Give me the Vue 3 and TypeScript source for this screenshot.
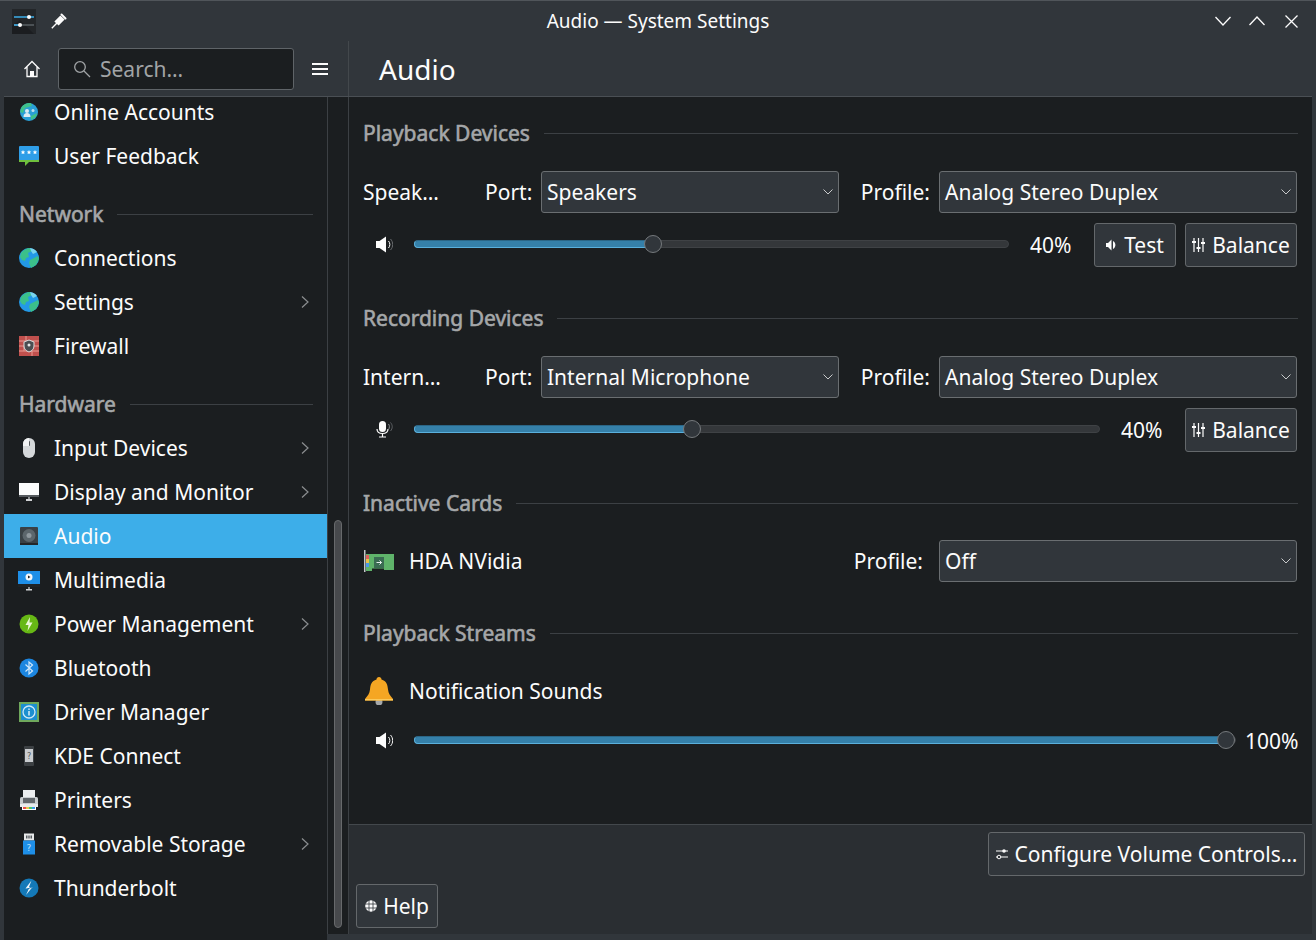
<script setup lang="ts">
const I: Record<string, string> = {
  online: '<circle cx="12" cy="12" r="9" fill="#2a9fd6"/><path d="M4.500 7c3-3.500 6-4.500 9.500-4l1 3-7 2-2 5-3-1zM14 16l6-3-1 4-5 3z" fill="#3fc08a"/><circle cx="10" cy="11" r="2" fill="#dcecf3"/><path d="M6.500 17c0-3 1.500-4 3.500-4s3.500 1 3.500 4z" fill="#dcecf3"/><circle cx="16" cy="10.500" r="1.500" fill="#bfe0ee"/>',
  feedback: '<path d="M2 3h20v15H12l-4 4v-4H2z" fill="#6fc03d"/><rect x="2" y="2" width="20" height="14" rx="1" fill="#2f9ee8"/><path d="M6 6l.7 1.400 1.500.2-1.100 1 .3 1.500L6 9.400l-1.400.7.3-1.500-1.100-1 1.500-.2zM12 6l.7 1.400 1.500.2-1.100 1 .3 1.500-1.400-.7-1.400.7.3-1.500-1.100-1 1.500-.2zM18 6l.7 1.400 1.500.2-1.100 1 .3 1.500-1.400-.7-1.400.7.3-1.500-1.100-1 1.500-.2z" fill="#fff"/>',
  globe: '<circle cx="12" cy="12" r="10" fill="#2399e6"/><path d="M4 7c2-3 6-5 9-5l2 3-4 2 1 4-3 1-1 3-3-1-2-3zM13 14l8-4 1 3-3 6-5 3-2-5z" fill="#3bc08a"/><path d="M13 2c3 .3 5.500 1.800 7 4l-4 2-2-3z" fill="#79d4ee"/>',
  firewall: '<rect x="2" y="2" width="20" height="20" fill="#c0504d"/><path d="M2 7h20M2 12h20M2 17h20M9 2v5M16 7v5M7 12v5M15 17v5" stroke="#e79a93" stroke-width="1"/><path d="M12 6l5 2v4c0 3-2 5-5 6-3-1-5-3-5-6V8z" fill="#4b4f52" stroke="#dcdcdc"/><circle cx="12" cy="11" r="1.500" fill="#e8e8e8"/>',
  mouse: '<rect x="6" y="2" width="12" height="20" rx="6" fill="#d5d8da"/><rect x="11" y="5" width="2" height="5" rx="1" fill="#55595c"/><path d="M6 8a6 6 0 0 1 6-6v8H6z" fill="#f2f3f4"/>',
  display: '<rect x="2" y="3" width="20" height="14" fill="#fbfcfc"/><rect x="2" y="15" width="20" height="2" fill="#555a5e"/><rect x="9" y="19" width="6" height="2" fill="#d0d2d4"/><rect x="11" y="17" width="2" height="2" fill="#8a8d90"/>',
  audio: '<rect x="3" y="3" width="18" height="18" rx="1" fill="#3a4146"/><circle cx="12" cy="11.500" r="6.500" fill="#5c666c"/><circle cx="12" cy="11.500" r="2.500" fill="#8f989e"/><rect x="3" y="19" width="18" height="2" fill="#232629"/>',
  multimedia: '<rect x="1" y="3" width="22" height="16" fill="#1f2326"/><rect x="1" y="3" width="22" height="13" fill="#1e8fe8"/><circle cx="12" cy="9" r="3.500" fill="#f5f7f8"/><path d="M11 7.500l2.500 1.500-2.500 1.500z" fill="#1f2326"/><rect x="9" y="21" width="6" height="1.500" fill="#d5d7d9"/><rect x="11" y="19" width="2" height="2" fill="#8a8d90"/>',
  power: '<circle cx="12" cy="12" r="9.500" fill="#67b815"/><path d="M13 5l-4.500 8h3L10.500 19 15.500 10.500h-3z" fill="#eaf7d4"/>',
  bluetooth: '<circle cx="12" cy="12" r="9.500" fill="#1c86e0"/><path d="M8.500 8.500l7 6.500-3.500 3V6l3.500 3-7 6.500" fill="none" stroke="#cfe7fb" stroke-width="1.200"/>',
  driver: '<rect x="2" y="2" width="20" height="20" fill="#6fa85c"/><rect x="4" y="4" width="16" height="16" fill="#1c8fd0"/><circle cx="12" cy="12" r="6" fill="none" stroke="#cfe9f7" stroke-width="1.300"/><rect x="11.300" y="11" width="1.400" height="4.500" fill="#e8f4fa"/><rect x="11.300" y="8.500" width="1.400" height="1.400" fill="#e8f4fa"/>',
  kde: '<rect x="7" y="2" width="10" height="20" rx="1" fill="#3c4043"/><rect x="8" y="5" width="8" height="13" fill="#c9cccf"/><text x="12" y="15" font-size="8" fill="#55595c" text-anchor="middle" font-family="DejaVu Sans">?</text>',
  printer: '<rect x="6" y="2" width="12" height="8" fill="#eceeef"/><rect x="3" y="9" width="18" height="10" rx="1.500" fill="#c8ccce"/><rect x="3" y="16" width="18" height="3" fill="#e8eaeb"/><rect x="5" y="19" width="14" height="3" fill="#ffffff"/><path d="M6 19h3v2H6z" fill="#e8504a"/><path d="M9 19h3v2H9z" fill="#e8c84a"/><path d="M12 19h3v2h-3z" fill="#4ac86a"/><path d="M15 19h3v2h-3z" fill="#3d9ae8"/><rect x="6" y="10" width="12" height="5" fill="#62676b"/>',
  usb: '<rect x="7" y="1.500" width="10" height="7" fill="#e6e8e9"/><path d="M9 3.500h1.500v3H9zM13.500 3.500H15v3h-1.500zM11.300 3.500h1.400v3h-1.400z" fill="#555a5e"/><rect x="6" y="8.500" width="12" height="14" fill="#1e8fe8"/><text x="12" y="19" font-size="9" fill="#bfe0fb" text-anchor="middle" font-family="DejaVu Sans">?</text>',
  bolt: '<circle cx="12" cy="12" r="9.500" fill="#1479b8"/><path d="M14.500 4.500L8.500 12.500h3.500l-3 6.500 6.500-8H12z" fill="#eef6fb"/><path d="M8 14l7-3" stroke="#1479b8" stroke-width="1"/>',
}

interface Entry { name: string; icon: string; arrow?: boolean; active?: boolean }
interface Group { title?: string; items: Entry[] }

const groups: Group[] = [
  { items: [
    { name: 'Online Accounts', icon: 'online' },
    { name: 'User Feedback', icon: 'feedback' },
  ] },
  { title: 'Network', items: [
    { name: 'Connections', icon: 'globe' },
    { name: 'Settings', icon: 'globe', arrow: true },
    { name: 'Firewall', icon: 'firewall' },
  ] },
  { title: 'Hardware', items: [
    { name: 'Input Devices', icon: 'mouse', arrow: true },
    { name: 'Display and Monitor', icon: 'display', arrow: true },
    { name: 'Audio', icon: 'audio', active: true },
    { name: 'Multimedia', icon: 'multimedia' },
    { name: 'Power Management', icon: 'power', arrow: true },
    { name: 'Bluetooth', icon: 'bluetooth' },
    { name: 'Driver Manager', icon: 'driver' },
    { name: 'KDE Connect', icon: 'kde' },
    { name: 'Printers', icon: 'printer' },
    { name: 'Removable Storage', icon: 'usb', arrow: true },
    { name: 'Thunderbolt', icon: 'bolt' },
  ] },
]

const fillW = (p: number) => `calc(9px + (100% - 18px) * ${p})`
</script>

<template>
  <div class="window">
    <header class="titlebar">
      <div class="tb-left">
        <svg class="app-icon" width="24" height="25" viewBox="0 0 24 25">
          <rect width="24" height="25" fill="#232629" />
          <path d="M0 25V17L8 11l14 14z" fill="#1b1d20" />
          <path d="M2 8h20" stroke="#3daee9" stroke-width="1.500" />
          <path d="M2 16h20" stroke="#5a6065" stroke-width="1.500" />
          <path d="M2 16h7" stroke="#3daee9" stroke-width="1.500" />
          <circle cx="17" cy="8" r="2" fill="#fcfcfc" />
          <circle cx="8" cy="16" r="2" fill="#fcfcfc" />
        </svg>
        <svg width="16" height="16" viewBox="0 0 16 16">
          <path d="M.8 15.200L6 10" stroke="#fcfcfc" stroke-width="1.400" />
          <path d="M5.500 10.500l6-6" stroke="#fcfcfc" stroke-width="6" />
          <path d="M10.500 1.500l4 4" stroke="#fcfcfc" stroke-width="2" stroke-linecap="round" />
        </svg>
      </div>
      <div class="title">Audio — System Settings</div>
      <div class="tb-right">
        <svg width="16" height="10" viewBox="0 0 16 10"><path d="M.5 1L8 9l7.500-8" fill="none" stroke="#fcfcfc" stroke-width="1.300" /></svg>
        <svg width="16" height="10" viewBox="0 0 16 10"><path d="M.5 9L8 1l7.500 8" fill="none" stroke="#fcfcfc" stroke-width="1.300" /></svg>
        <svg class="close" width="13" height="13" viewBox="0 0 13 13"><path d="M.5.500l12 12M12.500.500l-12 12" fill="none" stroke="#fcfcfc" stroke-width="1.300" /></svg>
      </div>
    </header>

    <div class="toolbar">
      <div class="tool-left">
        <svg class="home" width="18" height="18" viewBox="0 0 18 18">
          <path d="M1.500 9L9 1.500 16.500 9M4 7v9.500h10V7" fill="none" stroke="#fcfcfc" stroke-width="1.300" />
          <rect x="7" y="11" width="4" height="5.500" fill="#fcfcfc" />
        </svg>
        <div class="search">
          <svg width="18" height="18" viewBox="0 0 18 18">
            <circle cx="7" cy="7" r="5.300" fill="none" stroke="#a1a4a6" stroke-width="1.300" />
            <path d="M11 11l6 6" stroke="#a1a4a6" stroke-width="1.300" />
          </svg>
          <span>Search…</span>
        </div>
        <div class="burger"><i></i><i></i><i></i></div>
      </div>
      <h1 class="page-title">Audio</h1>
    </div>

    <div class="body">
      <nav class="sidebar">
        <div class="list">
          <div v-for="(g, gi) in groups" :key="gi">
            <div v-if="g.title" class="group-head">
              <span>{{ g.title }}</span><b></b>
            </div>
            <div v-for="it in g.items" :key="it.name" class="item" :class="{ active: it.active }">
              <svg class="item-icon" width="24" height="24" viewBox="0 0 24 24" v-html="I[it.icon]"></svg>
              <span>{{ it.name }}</span>
              <svg v-if="it.arrow" class="chev" width="10" height="14" viewBox="0 0 10 14">
                <path d="M2 1.500L8 7l-6 5.500" fill="none" stroke="#8b8e90" stroke-width="1.200" />
              </svg>
            </div>
          </div>
        </div>
      </nav>
      <div class="gutter"><div class="thumb"></div></div>

      <main class="main">
        <div class="content">
          <section class="sec sec-first">
            <div class="heading"><span>Playback Devices</span><b></b></div>
            <div class="dev-row">
              <span>Speak…</span>
              <span class="r">Port:</span>
              <div class="combo"><span>Speakers</span><svg width="10" height="6" viewBox="0 0 10 6"><path d="M.5.500L5 5 9.500.500" fill="none" stroke="#c8cacb" stroke-width="1" /></svg></div>
              <span class="r">Profile:</span>
              <div class="combo"><span>Analog Stereo Duplex</span><svg width="10" height="6" viewBox="0 0 10 6"><path d="M.5.500L5 5 9.500.500" fill="none" stroke="#c8cacb" stroke-width="1" /></svg></div>
            </div>
            <div class="slider-row">
              <svg class="vol" width="17" height="17" viewBox="0 0 17 17">
                <path d="M0 5h3.500L10 .5v16L3.500 12H0z" fill="#fcfcfc" />
                <path d="M12.500 5c1.800 2 1.800 5 0 7" fill="none" stroke="#fcfcfc" stroke-width="1" />
                <path d="M14.500 3c2.900 3 2.900 8 0 11" fill="none" stroke="#6a6d70" stroke-width="1" />
              </svg>
              <div class="track">
                <div class="fill" :style="{ width: fillW(0.399) }"></div>
                <div class="knob" :style="{ left: fillW(0.399) }"></div>
              </div>
              <span class="pct">40%</span>
              <button class="btn test">
                <svg width="12" height="12" viewBox="0 0 12 12"><path d="M0 4h2l3.500-3.500v11L2 8H0z" fill="#fcfcfc" /><path d="M7 2c3.200 2 3.200 6 0 8z" fill="#fcfcfc" /></svg>
                Test
              </button>
              <button class="btn bal">
                <svg width="13" height="14" viewBox="0 0 13 14"><path d="M2 0v14M6.500 0v14M11 0v14" stroke="#fcfcfc" stroke-width="1.200" /><path d="M0 4h4M4.500 10h4M9 5h4" stroke="#fcfcfc" stroke-width="2" /></svg>
                Balance
              </button>
            </div>
          </section>

          <section class="sec">
            <div class="heading"><span>Recording Devices</span><b></b></div>
            <div class="dev-row">
              <span>Intern…</span>
              <span class="r">Port:</span>
              <div class="combo"><span>Internal Microphone</span><svg width="10" height="6" viewBox="0 0 10 6"><path d="M.5.500L5 5 9.500.500" fill="none" stroke="#c8cacb" stroke-width="1" /></svg></div>
              <span class="r">Profile:</span>
              <div class="combo"><span>Analog Stereo Duplex</span><svg width="10" height="6" viewBox="0 0 10 6"><path d="M.5.500L5 5 9.500.500" fill="none" stroke="#c8cacb" stroke-width="1" /></svg></div>
            </div>
            <div class="slider-row">
              <svg class="vol" width="17" height="17" viewBox="0 0 17 17">
                <rect x="3" y="0" width="7" height="11" rx="3.500" fill="#fcfcfc" />
                <path d="M1 8c0 3 2.300 4.500 5.500 4.500S12 11 12 8M6.500 12.500v3M3 16h7" fill="none" stroke="#fcfcfc" stroke-width="1.200" />
                <path d="M12.500 3c1.200 1.500 1.200 4 0 5.500" fill="none" stroke="#8a8d90" stroke-width="1" />
                <path d="M14.500 1.500c2.300 2.500 2.300 6 0 8.500" fill="none" stroke="#5f6265" stroke-width="1" />
              </svg>
              <div class="track">
                <div class="fill" :style="{ width: fillW(0.403) }"></div>
                <div class="knob" :style="{ left: fillW(0.403) }"></div>
              </div>
              <span class="pct">40%</span>
              <button class="btn bal">
                <svg width="13" height="14" viewBox="0 0 13 14"><path d="M2 0v14M6.500 0v14M11 0v14" stroke="#fcfcfc" stroke-width="1.200" /><path d="M0 4h4M4.500 10h4M9 5h4" stroke="#fcfcfc" stroke-width="2" /></svg>
                Balance
              </button>
            </div>
          </section>

          <section class="sec">
            <div class="heading"><span>Inactive Cards</span><b></b></div>
            <div class="card-row">
              <svg class="big" width="30" height="22" viewBox="0 0 30 22">
                <rect x="0" y="0" width="1.500" height="22" fill="#c4c8ca" />
                <path d="M2 4h28v16H20v-1.500H8V21H2z" fill="#5fb36a" />
                <rect x="2" y="5" width="3" height="4" fill="#e0605a" />
                <rect x="2" y="9" width="3" height="4" fill="#e8c04a" />
                <rect x="2" y="13" width="3" height="4" fill="#4a9ae8" />
                <rect x="10" y="7" width="10" height="11" fill="#3a6b52" />
                <path d="M12.500 12.500h5M15.500 10.500l2 2-2 2" fill="none" stroke="#e8f0ec" stroke-width="1" />
              </svg>
              <span class="grow">HDA NVidia</span>
              <span class="r">Profile:</span>
              <div class="combo wide"><span>Off</span><svg width="10" height="6" viewBox="0 0 10 6"><path d="M.5.500L5 5 9.500.500" fill="none" stroke="#c8cacb" stroke-width="1" /></svg></div>
            </div>
          </section>

          <section class="sec">
            <div class="heading"><span>Playback Streams</span><b></b></div>
            <div class="card-row stream">
              <svg class="big" width="30" height="28" viewBox="0 0 30 28">
                <circle cx="15" cy="25" r="3.500" fill="#a4a7a9" />
                <path d="M15 0c1.500 0 2.500 1 2.500 2.500 5 1.500 6 5 6.500 10 .5 4 2 6 5 9.500v1.500H1V22c3-3.500 4.500-5.500 5-9.500.5-5 1.500-8.500 6.500-10C12.500 1 13.500 0 15 0z" fill="#f5a623" />
                <path d="M1 22h28v1.500H1z" fill="#fbc95b" />
              </svg>
              <span>Notification Sounds</span>
            </div>
            <div class="slider-row stream-slider">
              <svg class="vol" width="17" height="17" viewBox="0 0 17 17">
                <path d="M0 5h3.500L10 .5v16L3.500 12H0z" fill="#fcfcfc" />
                <path d="M12.500 5c1.800 2 1.800 5 0 7" fill="none" stroke="#fcfcfc" stroke-width="1" />
                <path d="M14.500 3c2.900 3 2.900 8 0 11" fill="none" stroke="#fcfcfc" stroke-width="1" />
              </svg>
              <div class="track">
                <div class="fill" :style="{ width: fillW(1) }"></div>
                <div class="knob" :style="{ left: fillW(1) }"></div>
              </div>
              <span class="pct small">100%</span>
            </div>
          </section>
        </div>

        <footer class="footer">
          <div class="foot-right">
            <button class="btn cfg">
              <svg width="12" height="12" viewBox="0 0 12 12">
                <path d="M0 3h12M0 9h12" stroke="#fcfcfc" stroke-width="1" />
                <circle cx="8" cy="3" r="1.800" fill="#fcfcfc" />
                <circle cx="3" cy="9" r="1.800" fill="#31363b" stroke="#fcfcfc" />
              </svg>
              <span>Configure Volume Controls…</span>
            </button>
          </div>
          <button class="btn help">
            <svg width="12" height="12" viewBox="0 0 12 12">
              <circle cx="6" cy="6" r="5.800" fill="#fcfcfc" />
              <path d="M4 0v12M8 0v12M0 4h12M0 8h12" stroke="#31363b" stroke-width="0.800" />
            </svg>
            Help
          </button>
        </footer>
      </main>
    </div>
  </div>
</template>

<style>
html, body { margin: 0; background: #31363b; }
</style>

<style scoped>
.window {
  width: 1316px;
  height: 940px;
  box-sizing: border-box;
  display: flex;
  flex-direction: column;
  background: #31363b;
  border-top: 1px solid #50555a;
  padding: 0 4px 6px;
  font-family: "Noto Sans", sans-serif;
  font-size: 21px;
  color: #fcfcfc;
  overflow: hidden;
}
.titlebar {
  height: 40px;
  flex: none;
  display: flex;
  align-items: center;
  position: relative;
}
.tb-left { display: flex; align-items: center; gap: 15px; margin-left: 8px; flex: 1; }
.title { font-size: 19px; text-align: center; position: absolute; left: 0; right: 0; }
.tb-right { display: flex; align-items: center; gap: 18px; margin-right: 14px; z-index: 1; }
.close { margin-left: 2px; }

.toolbar {
  height: 56px;
  flex: none;
  display: flex;
  border-bottom: 1px solid #4a4f54;
  box-sizing: border-box;
}
.tool-left {
  width: 345px;
  flex: none;
  display: flex;
  align-items: center;
  box-sizing: border-box;
  border-right: 1px solid #43484c;
  padding-top: 1px;
}
.home { margin-left: 19px; }
.search {
  width: 236px;
  height: 42px;
  box-sizing: border-box;
  margin-left: 17px;
  border: 1px solid #5f6468;
  border-radius: 3px;
  background: #1b1e20;
  display: flex;
  align-items: center;
  gap: 9px;
  padding-left: 14px;
  color: #a1a4a6;
}
.burger { margin-left: 18px; width: 16px; display: flex; flex-direction: column; gap: 3px; }
.burger i { display: block; height: 2px; background: #fcfcfc; }
.page-title { margin: 0 0 0 30px; font-size: 28px; font-weight: 400; line-height: 56px; }

.body { flex: 1; min-height: 0; display: flex; }
.sidebar { width: 323px; flex: none; background: #1b1e20; overflow: hidden; margin-bottom: -6px; }
.list { margin-top: -7px; }
.group-head {
  height: 44px;
  padding: 14px 14px 0 15px;
  display: flex;
  align-items: center;
  color: #a5a7a9;
  -webkit-text-stroke: 0.6px #a5a7a9;
  gap: 14px;
}
.group-head b { flex: 1; height: 1px; background: #3c4044; }
.item {
  height: 44px;
  display: flex;
  align-items: center;
  padding: 0 0 0 13px;
  position: relative;
}
.item.active { background: #3daee9; }
.item-icon { margin-right: 13px; flex: none; width: 24px; height: 24px; }
.chev { position: absolute; left: 296px; top: 15px; }

.gutter {
  width: 22px;
  flex: none;
  box-sizing: border-box;
  background: #1b1e20;
  border-left: 1px solid #3c4044;
  border-right: 1px solid #3c4044;
  padding-top: 423px;
  padding-left: 6px;
}
.thumb {
  width: 8px;
  height: 408px;
  box-sizing: border-box;
  background: #47494c;
  border: 1px solid #67696b;
  border-radius: 4px;
}

.main { flex: 1; min-width: 0; display: flex; flex-direction: column; background: #1b1e20; }
.content { flex: 1; min-height: 0; padding: 0 15px 0 14px; }
.sec { margin-top: 36px; }
.sec-first { margin-top: 21px; }
.heading {
  height: 30px;
  display: flex;
  align-items: center;
  gap: 14px;
  color: #a5a7a9;
  -webkit-text-stroke: 0.6px #a5a7a9;
  margin-bottom: 23px;
  margin-right: -1px;
}
.heading b { flex: 1; height: 1px; background: #3c4044; }
.dev-row {
  display: grid;
  grid-template-columns: 113px 47px 298px 82px 358px;
  column-gap: 9px;
  align-items: center;
  height: 42px;
}
.r { text-align: right; white-space: nowrap; }
.combo {
  height: 42px;
  box-sizing: border-box;
  border: 1px solid #6a6e71;
  border-radius: 3px;
  background: #31363b;
  display: flex;
  align-items: center;
  justify-content: space-between;
  padding: 0 5px;
}
.wide { width: 358px; flex: none; margin-left: 16px; }
.slider-row {
  height: 44px;
  margin-top: 10px;
  display: flex;
  align-items: center;
}
.vol { margin-left: 13px; flex: none; position: relative; top: -1px; }
.track {
  flex: 1;
  box-sizing: border-box;
  height: 8px;
  margin-left: 21px;
  background: #34373a;
  border: 1px solid #3f4245;
  border-radius: 4px;
  position: relative;
  top: -1px;
}
.fill {
  position: absolute;
  left: -1px;
  top: -1px;
  height: 8px;
  box-sizing: border-box;
  background: #3580a9;
  border: 1px solid #5ab0dc;
  border-top-color: #2b6686;
  border-right: none;
  border-radius: 4px 0 0 4px;
}
.knob {
  position: absolute;
  top: 50%;
  width: 18px;
  height: 18px;
  box-sizing: border-box;
  margin: -9px 0 0 -9px;
  border-radius: 50%;
  background: #31363b;
  border: 1px solid #75797c;
}
.pct { margin-left: 21px; width: 41px; text-align: right; white-space: nowrap; }
.pct.small { width: 53px; margin-left: 9px; margin-right: -1px; }
.btn {
  height: 44px;
  box-sizing: border-box;
  border: 1px solid #64686b;
  border-radius: 3px;
  background: #31363b;
  color: #fcfcfc;
  font: inherit;
  display: flex;
  align-items: center;
  justify-content: center;
  gap: 6px;
  padding: 0;
  white-space: nowrap;
}
.test { width: 82px; margin-left: 23px; }
.bal { width: 112px; margin-left: 23px; gap: 7px; }
.test + .bal { margin-left: 9px; }
.card-row { height: 42px; display: flex; align-items: center; margin-top: -1px; }
.big { flex: none; margin-left: 1px; margin-right: 15px; }
.grow { flex: 1; }
.stream { margin-top: -1px; }
.stream-slider { margin-top: 7px; }

.footer {
  height: 110px;
  flex: none;
  box-sizing: border-box;
  background: #2a2e32;
  border-top: 1px solid #43484c;
  padding: 7px 7px 0;
  display: flex;
  flex-direction: column;
  align-items: flex-start;
  gap: 8px;
}
.foot-right { align-self: flex-end; }
.cfg { width: 317px; gap: 7px; }
.help { width: 82px; }
</style>
